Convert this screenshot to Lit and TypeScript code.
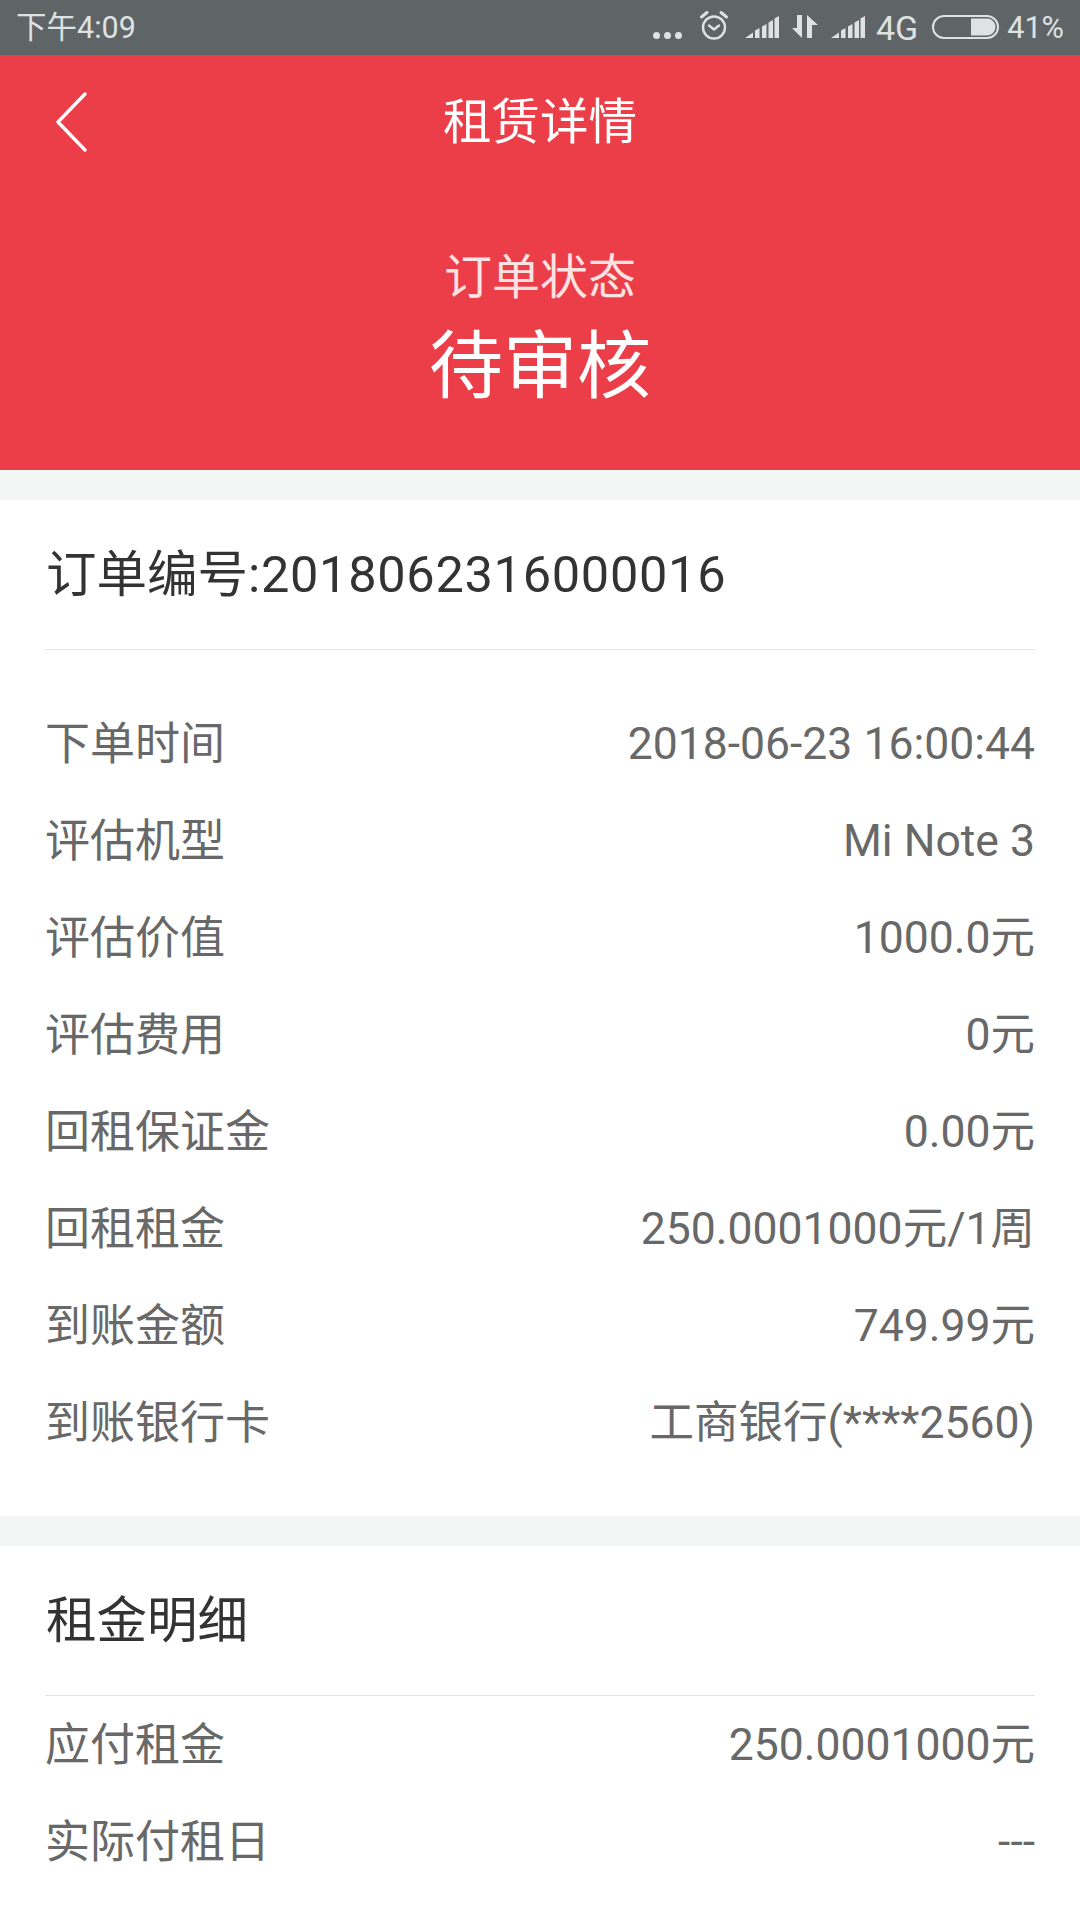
import { LitElement, html, css, svg } from "lit";
import { customElement } from "lit/decorators.js";

const infoRows: [string, string][] = [
  ["下单时间", "2018-06-23 16:00:44"],
  ["评估机型", "Mi Note 3"],
  ["评估价值", "1000.0元"],
  ["评估费用", "0元"],
  ["回租保证金", "0.00元"],
  ["回租租金", "250.0001000元/1周"],
  ["到账金额", "749.99元"],
  ["到账银行卡", "工商银行(****2560)"],
];
const rentRows: [string, string][] = [
  ["应付租金", "250.0001000元"],
  ["实际付租日", "---"],
];

const signal = svg`<svg class="sig" width="34" height="22" viewBox="0 0 34 22" fill="#dfe2e2">
  <path d="M0 22L8 16.5V22zM10 14.5L14.5 12V22H10zM17 10.5L21.5 8V22H17zM23.5 6.5L28 4V22H23.5zM29.5 2.5L34 0V22H29.5z"/></svg>`;

@customElement("app-root")
export class AppRoot extends LitElement {
  static styles = css`
    :host {
      display: block;
      width: 1080px;
      height: 1920px;
      overflow: hidden;
      background: #fff;
      font-family: Roboto, "Noto Sans CJK SC", sans-serif;
    }
    .status {
      height: 55px;
      box-sizing: border-box;
      background: #5f6566;
      color: #dfe2e2;
      display: flex;
      align-items: center;
      padding: 0 16px 0 16px;
      font-size: 30.6px;
      line-height: 40px;
      font-weight: 400;
    }
    .status .time { flex: 1; font-size: 30.5px; }
    .icons { display: flex; align-items: center; }
    .dots { display: flex; gap: 4px; margin-top: 16px; margin-right: 17px; }
    .dots i { width: 7px; height: 7px; border-radius: 50%; background: #dfe2e2; }
    .alarm { margin-right: 16px; margin-top: -5px; }
    .sig { margin-top: -1px; }
    .arrows { margin: -2px 13px 0 13px; }
    .net { margin: 0 14px 0 11px; font-size: 34px; }
    .batt { margin-right: 8px; margin-top: -1px; }
    .hero {
      height: 415px;
      background: #ec3e48;
      color: #fff;
      display: flex;
      flex-direction: column;
    }
    .nav {
      height: 130px;
      box-sizing: border-box;
      padding-top: 5px;
      display: flex;
      align-items: center;
      justify-content: center;
      position: relative;
      font-size: 48.5px;
      line-height: 60px;
    }
    .back { position: absolute; left: 55px; top: 37px; }
    .state-label {
      text-align: center;
      font-size: 48px;
      line-height: 56px;
      margin-top: 65px;
      opacity: 0.85;
    }
    .state {
      text-align: center;
      font-size: 74px;
      line-height: 100px;
      margin-top: 11px;
    }
    .band { height: 30px; background: #f4f5f5; }
    .card { padding: 0 45px; }
    .head {
      height: 149px;
      display: flex;
      align-items: center;
      padding-left: 1px;
      font-size: 50.5px;
      line-height: 60px;
      color: #333;
      border-bottom: 1px solid #e5e5e5;
    }
    .head b { font-weight: 400; letter-spacing: 0.7px; }
    .list { padding: 45px 0 45px; }
    .list.tight { padding: 0; }
    .row {
      height: 97px;
      display: flex;
      align-items: center;
      justify-content: space-between;
      font-size: 45px;
      line-height: 60px;
      color: #686868;
    }
    .row .val { font-size: 44.5px; }
    .row .key { padding-top: 2px; }
  `;

  private rows(items: [string, string][]) {
    return items.map(
      ([k, v]) => html`<div class="row"><span class="key">${k}</span><span class="val">${v}</span></div>`
    );
  }

  render() {
    return html`
      <div class="status">
        <span class="time">下午4:09</span>
        <div class="icons">
          <div class="dots"><i></i><i></i><i></i></div>
          <svg class="alarm" width="30" height="30" viewBox="0 0 30 30" fill="none" stroke="#dfe2e2" stroke-width="2.4" stroke-linecap="round" stroke-linejoin="round">
            <circle cx="15" cy="17.5" r="11"/>
            <path d="M10 15.5l5 4 5-4"/>
            <path d="M2.5 7L8 2.5M27.5 7L22 2.5" stroke-width="3"/>
          </svg>
          ${signal}
          <svg class="arrows" width="26" height="23" viewBox="0 0 26 23" fill="#dfe2e2">
            <path d="M5 0h5v23L0 13h5zM15 0l11 10h-6v13h-5z"/>
          </svg>
          ${signal}
          <span class="net">4G</span>
          <svg class="batt" width="67" height="24" viewBox="0 0 67 24">
            <rect x="1" y="1" width="65" height="22" rx="11" fill="none" stroke="#dfe2e2" stroke-width="2"/>
            <path d="M39 3.5h16a8.5 8.5 0 0 1 0 17H39z" fill="#dfe2e2"/>
          </svg>
          <span>41%</span>
        </div>
      </div>
      <div class="hero">
        <div class="nav">
          <svg class="back" width="32" height="60" viewBox="0 0 32 60" fill="none" stroke="#fff" stroke-width="3.4" stroke-linecap="round" stroke-linejoin="round">
            <path d="M30 2L3 30l27 28"/>
          </svg>
          <span>租赁详情</span>
        </div>
        <div class="state-label">订单状态</div>
        <div class="state">待审核</div>
      </div>
      <div class="band"></div>
      <div class="card">
        <div class="head"><span>订单编号<b>:2018062316000016</b></span></div>
        <div class="list">${this.rows(infoRows)}</div>
      </div>
      <div class="band"></div>
      <div class="card">
        <div class="head">租金明细</div>
        <div class="list tight">${this.rows(rentRows)}</div>
      </div>
    `;
  }
}
